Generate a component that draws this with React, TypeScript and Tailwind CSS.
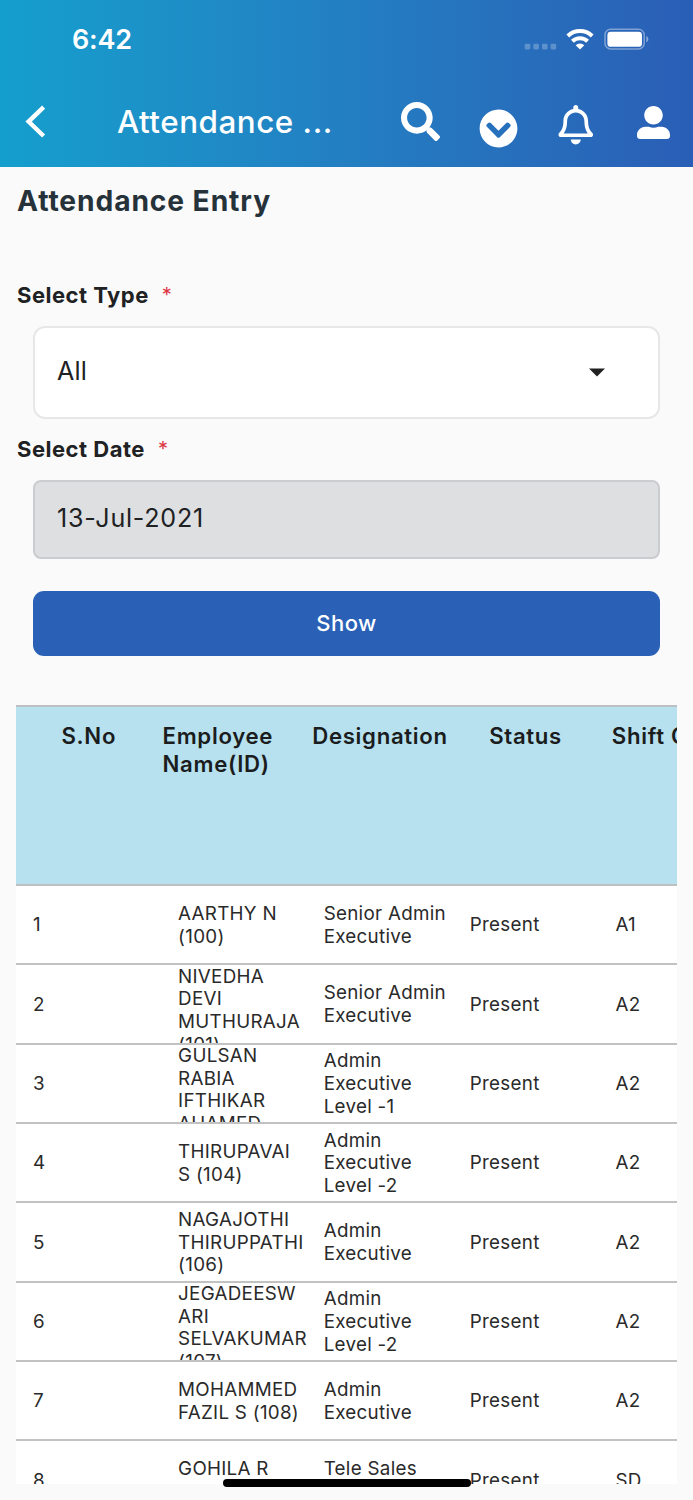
import React from 'react';
import { FaSearch, FaChevronCircleDown, FaRegBell, FaUserAlt } from 'react-icons/fa';

interface Employee {
  id: number;
  name: string[];
  designation: string[];
  status: string;
  shift: string;
}

// Names are already broken into lines the way the narrow column wraps them
const employees: Employee[] = [
  { id: 1, name: ['AARTHY N', '(100)'], designation: ['Senior Admin', 'Executive'], status: 'Present', shift: 'A1' },
  { id: 2, name: ['NIVEDHA', 'DEVI', 'MUTHURAJA', '(101)'], designation: ['Senior Admin', 'Executive'], status: 'Present', shift: 'A2' },
  { id: 3, name: ['GULSAN', 'RABIA', 'IFTHIKAR', 'AHAMED'], designation: ['Admin', 'Executive', 'Level -1'], status: 'Present', shift: 'A2' },
  { id: 4, name: ['THIRUPAVAI', 'S (104)'], designation: ['Admin', 'Executive', 'Level -2'], status: 'Present', shift: 'A2' },
  { id: 5, name: ['NAGAJOTHI', 'THIRUPPATHI', '(106)'], designation: ['Admin', 'Executive'], status: 'Present', shift: 'A2' },
  { id: 6, name: ['JEGADEESW', 'ARI', 'SELVAKUMAR', '(107)'], designation: ['Admin', 'Executive', 'Level -2'], status: 'Present', shift: 'A2' },
  { id: 7, name: ['MOHAMMED', 'FAZIL S (108)'], designation: ['Admin', 'Executive'], status: 'Present', shift: 'A2' },
  { id: 8, name: ['GOHILA R', '(109)'], designation: ['Tele Sales', 'Executive'], status: 'Present', shift: 'SD' },
];

function StatusBar() {
  return (
    <div className="flex h-[78px] items-center justify-between pl-[72px] pr-[44px]">
      <span className="pt-[1px] text-[27px] font-semibold leading-none tracking-[-0.2px]">6:42</span>
      <div className="flex items-center">
        <svg width="33" height="22" viewBox="0 0 33 22" fill="#fff" fillOpacity="0.25">
          <rect x="0.7" y="15.8" width="5.6" height="5.6" rx="1.3" />
          <rect x="9.3" y="15.8" width="5.6" height="5.6" rx="1.3" />
          <rect x="18" y="15.8" width="5.6" height="5.6" rx="1.3" />
          <rect x="26.6" y="15.8" width="5.6" height="5.6" rx="1.3" />
        </svg>
        <svg className="ml-[9px]" width="28" height="22" viewBox="0 0 28 22" fill="none" stroke="#fff">
          <path d="M1.8 8 A17.6 17.6 0 0 1 26.2 8" strokeWidth="4" />
          <path d="M6.4 13.2 A11 11 0 0 1 21.6 13.2" strokeWidth="4" />
          <path d="M14 21.4 L9.7 17.2 A6.1 6.1 0 0 1 18.3 17.2 Z" fill="#fff" stroke="none" />
        </svg>
        <svg className="ml-[10px]" width="45" height="22" viewBox="0 0 45 22" fill="none">
          <rect x="1" y="1.3" width="39.2" height="19.6" rx="5.6" stroke="#fff" strokeOpacity="0.4" strokeWidth="1.5" />
          <rect x="3.4" y="3.8" width="34.6" height="15" rx="3.4" fill="#fff" />
          <path d="M42.3 8 C45 9.3 45 13.1 42.3 14.4 Z" fill="#fff" fillOpacity="0.45" />
        </svg>
      </div>
    </div>
  );
}

function Header() {
  return (
    <header className="h-[167px] bg-linear-to-r from-[#149fcd] to-[#2a5eb6] text-white">
      <StatusBar />
      <div className="flex h-[89px] items-start">
        <svg className="ml-[24px] mt-[27px] shrink-0" width="22" height="34" viewBox="0 0 22 34" fill="none" stroke="#fff" strokeWidth="4.4">
          <path d="M19.6 2.2 L4.6 16.6 L19.6 31" />
        </svg>
        <h1 className="ml-[71px] mt-[24px] w-[284px] whitespace-nowrap text-[31.4px] font-medium leading-[40px] tracking-[0.5px]">Attendance ...</h1>
        <FaSearch className="mt-[24px] shrink-0" size={39} />
        <FaChevronCircleDown className="ml-[39px] mt-[30.5px] shrink-0" size={39} />
        <FaRegBell className="ml-[38px] mt-[27px] shrink-0" size={39.5} />
        <FaUserAlt className="ml-[41.5px] mt-[28px] shrink-0" size={33} />
      </div>
    </header>
  );
}

function FieldLabel({ text }: { text: string }) {
  return (
    <div className="flex items-center whitespace-nowrap text-[22px] leading-[28px]">
      <span className="font-bold tracking-[0.5px] text-[#202122]">{text}</span>
      <span className="ml-[13px] text-[20px] text-[#dc3545]">*</span>
    </div>
  );
}

function Lines({ lines }: { lines: string[] }) {
  return (
    <div className="max-h-full overflow-hidden">
      {lines.map((line) => (
        <div key={line}>{line}</div>
      ))}
    </div>
  );
}

function AttendanceTable() {
  return (
    <div className="ml-[16px] mt-[49px] h-[779px] w-[661px] overflow-hidden bg-white">
      <div className="w-[728px]">
        <div className="grid h-[181px] grid-cols-5 border-b-2 border-t-2 border-[#bcc0c2] bg-[#b7e1ee] pt-[15px] text-center text-[22.2px] font-semibold leading-[27.7px] tracking-[0.68px] text-[#1a1c1d]">
          <div>S.No</div>
          <div className="pl-[1px] text-left">
            Employee
            <br />
            Name(ID)
          </div>
          <div>Designation</div>
          <div>Status</div>
          <div className="whitespace-nowrap">Shift Code</div>
        </div>
        {employees.map((employee) => (
          <div
            key={employee.id}
            className="grid h-[79.35px] grid-cols-5 grid-rows-[77.35px] items-center whitespace-nowrap border-b-2 border-[#c2c2c2] text-[18.8px] leading-[22.7px] tracking-[0.28px] text-[#2a2a2a]"
          >
            <div className="pl-[17px] pt-[2px]">{employee.id}</div>
            <div className={`flex h-full items-center pl-[16.5px] ${employee.name.length > 3 ? 'pt-[0.3px]' : 'pt-[1.8px]'}`}>
              <Lines lines={employee.name} />
            </div>
            <div className="flex h-full items-center pl-[16.5px] pt-[1.8px]">
              <Lines lines={employee.designation} />
            </div>
            <div className="pl-[17px] pt-[2px]">{employee.status}</div>
            <div className="pl-[17px] pt-[2px]">{employee.shift}</div>
          </div>
        ))}
      </div>
    </div>
  );
}

export default function App() {
  return (
    <div className="relative h-[1500px] w-[693px] overflow-hidden bg-[#fafafa] font-['Inter',sans-serif]">
      <Header />
      <main>
        <h2 className="ml-[17px] mt-[16px] text-[28.2px] font-bold leading-[36px] tracking-[0.9px] text-[#26323a]">Attendance Entry</h2>

        <div className="ml-[17px] mt-[62px]">
          <FieldLabel text="Select Type" />
        </div>
        <div className="ml-[33px] mt-[17px] flex h-[93px] w-[627px] items-center justify-between rounded-[12px] border-2 border-[#e7e7e8] bg-white pl-[22px] pr-[53px]">
          <span className="-mt-[3px] text-[25.1px] leading-[32px] tracking-[0.2px] text-[#202122]">All</span>
          <svg className="-mt-[1px]" width="16" height="9" viewBox="0 0 16 9" fill="#212121">
            <path d="M0 0.5 H16 L8 8.5 Z" />
          </svg>
        </div>

        <div className="ml-[17px] mt-[16px]">
          <FieldLabel text="Select Date" />
        </div>
        <div className="ml-[33px] mt-[17px] flex h-[79px] w-[627px] items-center rounded-[8px] border-2 border-[#cbcccf] bg-[#dedfe1] pl-[22px]">
          <span className="-mt-[4px] text-[25.1px] leading-[32px] tracking-[0.75px] text-[#202122]">13-Jul-2021</span>
        </div>

        <button className="ml-[33px] mt-[32px] block h-[65px] w-[627px] rounded-[11px] bg-[#2a61b7] text-[22px] font-medium tracking-[0.5px] text-white">Show</button>

        <AttendanceTable />
      </main>

      {/* Home indicator */}
      <div className="absolute bottom-[13px] left-[223px] h-[8px] w-[248px] rounded-full bg-black" />
    </div>
  );
}
